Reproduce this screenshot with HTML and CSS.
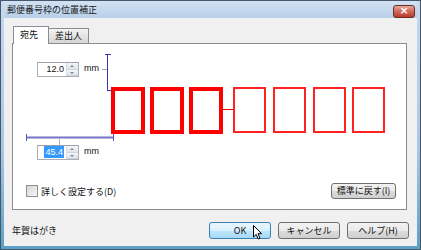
FILE: index.html
```html
<!DOCTYPE html>
<html>
	<head>
		<title>郵便番号枠の位置補正</title>
		<meta charset="utf-8">
		<link rel="stylesheet" href="styles.css">
	</head>
	<body>
		<div class="window">
			<div class="titlebar">
				<span class="title">郵便番号枠の位置補正</span>
				<span class="close">×</span>
			</div>
			<div class="client">
				<div class="tabbox">
					<div class="tabs">
						<div class="tab active">宛先</div>
						<div class="tab">差出人</div>
					</div>
					<div class="panel">
						<div class="diagram">
							<svg class="guides" width="393" height="139" viewBox="13 44 393 139">
								<!-- 縦方向の補正 -->
								<line x1="107.5" y1="54" x2="107.5" y2="91" stroke="#3434b4" stroke-width="1"/>
								<line x1="105" y1="54.5" x2="111" y2="54.5" stroke="#3434b4" stroke-width="1"/>
								<line x1="107" y1="90.5" x2="112" y2="90.5" stroke="#3434b4" stroke-width="1"/>
								<line x1="102" y1="69.5" x2="107" y2="69.5" stroke="#a8a8a8" stroke-width="1"/>
								<!-- 横方向の補正 -->
								<line x1="26" y1="137.5" x2="114" y2="137.5" stroke="#7474c8" stroke-width="2"/>
								<line x1="26.5" y1="134" x2="26.5" y2="141" stroke="#5858b8" stroke-width="1"/>
								<line x1="113.5" y1="134" x2="113.5" y2="141" stroke="#5858b8" stroke-width="1"/>
								<line x1="59.5" y1="139" x2="59.5" y2="145" stroke="#b0b0b0" stroke-width="1"/>
								<!-- 郵便番号枠 -->
								<rect x="113" y="89" width="30" height="43" fill="none" stroke="#f00" stroke-width="4"/>
								<rect x="152" y="89" width="30" height="43" fill="none" stroke="#f00" stroke-width="4"/>
								<rect x="191" y="89" width="30" height="43" fill="none" stroke="#f00" stroke-width="4"/>
								<line x1="223" y1="109.5" x2="234" y2="109.5" stroke="#f00" stroke-width="1"/>
								<rect x="234" y="88" width="31" height="44" fill="none" stroke="#f22" stroke-width="2"/>
								<rect x="274" y="88" width="31" height="44" fill="none" stroke="#f22" stroke-width="2"/>
								<rect x="314" y="88" width="31" height="44" fill="none" stroke="#f22" stroke-width="2"/>
								<rect x="353" y="88" width="31" height="44" fill="none" stroke="#f22" stroke-width="2"/>
							</svg>
							<div class="spin spin-top">
								<span class="value">12.0</span>
								<span class="arrows"><i class="up"></i><i class="down"></i></span>
							</div>
							<span class="unit unit-top">mm</span>
							<div class="spin spin-left">
								<span class="value"><em>45.4</em></span>
								<span class="arrows"><i class="up"></i><i class="down"></i></span>
							</div>
							<span class="unit unit-left">mm</span>
						</div>
						<div class="options">
							<label class="check"><span class="box"></span>詳しく設定する(D)</label>
							<span class="button small">標準に戻す(I)</span>
						</div>
					</div>
				</div>
				<div class="footer">
					<span class="kind">年賀はがき</span>
					<div class="buttons">
						<span class="button hover">OK</span>
						<span class="button">キャンセル</span>
						<span class="button">ヘルプ(H)</span>
					</div>
				</div>
			</div>
			<svg class="cursor" width="10" height="15" viewBox="0 0 10 15">
				<path d="M0.5 0.5 L0.5 12 L3.2 9.4 L5.2 14 L7 13.2 L5 8.7 L8.6 8.7 Z" fill="#fff" stroke="#000" stroke-width="1"/>
			</svg>
		</div>
	</body>
</html>
```

FILE: styles.css
```css
body {
	margin: 0;
	font-family: "Noto Sans CJK JP", sans-serif;
	font-size: 9px;
	color: #111;
}

.window {
	position: relative;
	width: 421px;
	height: 250px;
	box-sizing: border-box;
	border: 1px solid #47576a;
	padding: 0 3px 3px 3px;
	background: linear-gradient(#c6daef, #a9c6e6 60%, #5aa0c6);
}

.titlebar {
	height: 17px;
	display: flex;
	align-items: center;
	justify-content: space-between;
	background: linear-gradient(#d2e2f3, #b8cfe9);
}

.title {
	padding-left: 3px;
	color: #1a1a1a;
	line-height: 17px;
}

.close {
	width: 20px;
	height: 11px;
	margin: 3px 2px 0 0;
	border: 1px solid #6e2b22;
	border-radius: 3px;
	background: linear-gradient(#e8a89c, #d0685a 50%, #b93a2b);
	color: #fff;
	font-family: "DejaVu Sans", sans-serif;
	font-weight: bold;
	font-size: 11px;
	line-height: 10px;
	text-align: center;
}

.client {
	height: 228px;
	box-sizing: border-box;
	background: #f0f0f0;
	padding: 8px 6px 0 4px;
}

.tabbox {
	margin-left: 4px;
	width: 395px;
}

.tabs {
	display: flex;
	align-items: flex-end;
	height: 17px;
	padding-left: 1px;
}

.tab {
	height: 14px;
	padding: 0 6px;
	border: 1px solid #898c95;
	border-bottom: none;
	background: linear-gradient(#f3f3f3, #e4e4e4 50%, #d6d6d6);
	line-height: 14px;
	margin-left: -1px;
}

.tab.active {
	position: relative;
	z-index: 1;
	height: 17px;
	width: 22px;
	padding: 0 6px;
	margin-left: 0;
	margin-bottom: -1px;
	background: #fff;
	line-height: 15px;
}

.panel {
	height: 167px;
	box-sizing: border-box;
	border: 1px solid #898c95;
	background: #fff;
	display: flex;
	flex-direction: column;
}

.diagram {
	position: relative;
	height: 139px;
}

.guides {
	position: absolute;
	left: 0;
	top: 0;
}

.spin {
	position: absolute;
	left: 24px;
	width: 42px;
	height: 15px;
	box-sizing: border-box;
	border: 1px solid #abadb3;
	border-top-color: #9da0aa;
	display: flex;
	background: #fff;
}

.spin-top {
	top: 18px;
}

.spin-left {
	top: 101px;
}

.value {
	flex: 1;
	text-align: right;
	padding-right: 2px;
	font-family: "Liberation Sans", sans-serif;
	font-size: 9px;
	line-height: 13px;
}

.value em {
	font-style: normal;
	background: #3399ff;
	color: #fff;
	padding: 1px 1px;
}

.arrows {
	width: 11px;
	display: flex;
	flex-direction: column;
	border-left: 1px solid #d6dde5;
}

.arrows i {
	flex: 1;
	position: relative;
	background: linear-gradient(#f4f6f8, #dfe4ea);
	border-bottom: 1px solid #d0d5dc;
}

.arrows i:after {
	content: '';
	position: absolute;
	left: 3px;
	top: 2px;
	border: 2px solid transparent;
}

.arrows .up:after {
	border-bottom: 2px solid #6e8aa6;
	top: 0;
}

.arrows .down:after {
	border-top: 2px solid #6e8aa6;
	top: 2px;
}

.unit {
	position: absolute;
	left: 71px;
	line-height: 14px;
	font-family: "Liberation Sans", sans-serif;
	font-size: 9px;
}

.unit-top {
	top: 17px;
}

.unit-left {
	top: 100px;
}

.options {
	display: flex;
	align-items: center;
	justify-content: space-between;
	height: 16px;
	padding: 0 10px 0 13px;
}

.check {
	display: flex;
	align-items: center;
	gap: 3px;
}

.box {
	width: 10px;
	height: 10px;
	border: 1px solid #8e8f8f;
	background: linear-gradient(135deg, #d6d6d6, #f6f6f6);
}

.button {
	display: inline-block;
	width: 62px;
	height: 17px;
	box-sizing: border-box;
	border: 1px solid #707070;
	border-radius: 3px;
	background: linear-gradient(#f2f2f2, #ebebeb 50%, #dddddd 50%, #cfcfcf);
	text-align: center;
	line-height: 15px;
}

.button.small {
	width: 65px;
	height: 16px;
	line-height: 14px;
}

.button.hover {
	border-color: #3c7fb1;
	background: linear-gradient(#eaf6fd, #d9f0fc 50%, #bee6fd 50%, #a7d9f5);
}

.footer {
	display: flex;
	align-items: center;
	justify-content: space-between;
	margin-top: 12px;
	padding: 0 2px 0 4px;
}

.buttons {
	display: flex;
	gap: 7px;
}

.cursor {
	position: absolute;
	left: 252px;
	top: 224px;
}
```
